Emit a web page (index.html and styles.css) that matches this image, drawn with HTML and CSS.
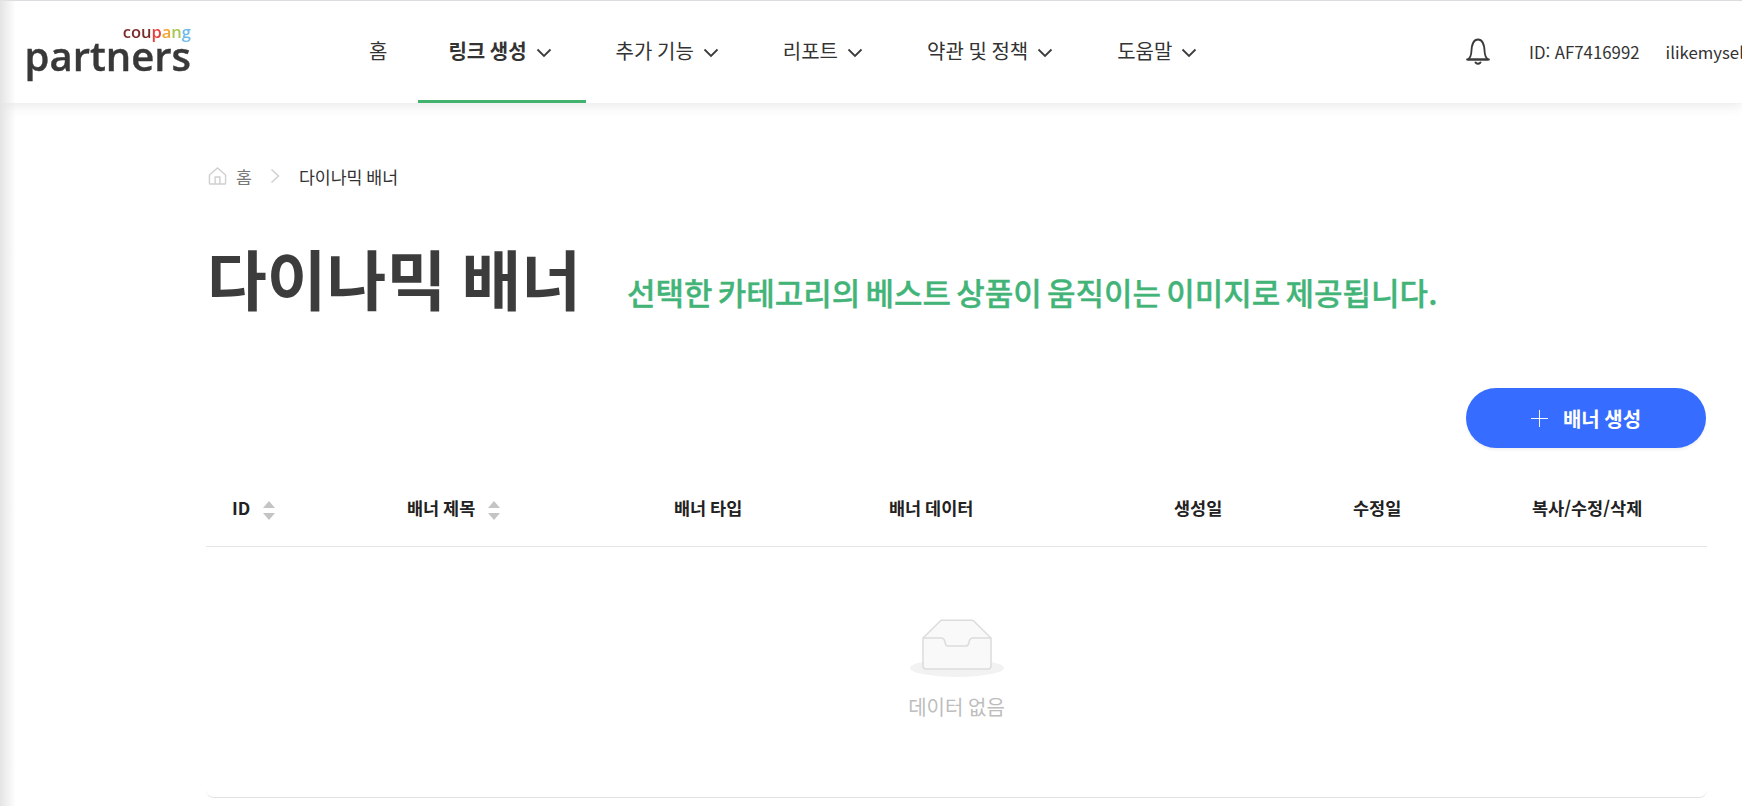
FILE: index.html
```html
<!DOCTYPE html>
<html lang="ko">
<head>
<meta charset="utf-8">
<title>다이나믹 배너</title>
<link rel="stylesheet" href="styles.css">
</head>
<body>
<header class="top">
  <a class="logo">
    <span class="logo-brand"><span class="c1">cou</span><span class="c2">p</span><span class="c3">a</span><span class="c4">n</span><span class="c5">g</span></span>
    <span class="logo-name">partners</span>
  </a>
  <nav class="nav">
    <a class="nav-item nav-home">홈</a>
    <a class="nav-item active">링크 생성<svg class="chev" viewBox="0 0 16 10"><path d="M1.500 1.500 8 8l6.500-6.500"/></svg></a>
    <a class="nav-item">추가 기능<svg class="chev" viewBox="0 0 16 10"><path d="M1.500 1.500 8 8l6.500-6.500"/></svg></a>
    <a class="nav-item">리포트<svg class="chev" viewBox="0 0 16 10"><path d="M1.500 1.500 8 8l6.500-6.500"/></svg></a>
    <a class="nav-item">약관 및 정책<svg class="chev" viewBox="0 0 16 10"><path d="M1.500 1.500 8 8l6.500-6.500"/></svg></a>
    <a class="nav-item">도움말<svg class="chev" viewBox="0 0 16 10"><path d="M1.500 1.500 8 8l6.500-6.500"/></svg></a>
  </nav>
  <div class="account">
    <svg class="bell" viewBox="0 0 24 28"><path d="M2 22.500c2.500-2 3.200-4 3.400-8C5.700 7 7 2.500 12 2.500s6.300 4.500 6.600 12c.2 4 .9 6 3.400 8Z"/><path d="M1 22.500h22M9.500 25.500c1.500 1.500 3.500 1.500 5 0"/></svg>
    <span class="acct-id">ID: AF7416992</span>
    <span class="acct-name">ilikemyself</span>
  </div>
</header>

<main class="page">
  <div class="crumbs">
    <svg class="home" viewBox="0 0 20 20"><path d="M1.500 9 10 1.500 18.500 9v8.500a1 1 0 0 1-1 1h-15a1 1 0 0 1-1-1Z"/><path d="M7.500 18.500V11h5v7.500"/></svg>
    <span class="crumb-home">홈</span>
    <svg class="crumb-sep" viewBox="0 0 10 16"><path d="M1.500 1.500 8.500 8l-7 6.500"/></svg>
    <span class="crumb-now">다이나믹 배너</span>
  </div>

  <div class="heading">
    <h1>다이나믹 배너</h1>
    <p>선택한 카테고리의 베스트 상품이 움직이는 이미지로 제공됩니다.</p>
  </div>

  <div class="actions">
    <button class="add"><svg class="plus" viewBox="0 0 18 18"><path d="M9 0v18M0 9h18"/></svg>배너 생성</button>
  </div>

  <section class="table">
    <div class="thead">
      <div class="th">ID<span class="sort"><i class="up"></i><i class="down"></i></span></div>
      <div class="th">배너 제목<span class="sort"><i class="up"></i><i class="down"></i></span></div>
      <div class="th">배너 타입</div>
      <div class="th">배너 데이터</div>
      <div class="th">생성일</div>
      <div class="th">수정일</div>
      <div class="th">복사/수정/삭제</div>
    </div>
    <div class="empty">
      <svg class="tray" viewBox="0 0 96 62">
        <ellipse class="tray-shadow" cx="48" cy="49" rx="47" ry="9"/>
        <path class="tray-body" d="M14 19 31 2.200c.6-.6 1.200-1 2-1h30c.8 0 1.400.4 2 1L82 19v28a3 3 0 0 1-3 3H17a3 3 0 0 1-3-3Z"/>
        <path class="tray-line" d="M14 19h18c2 0 3.200 1 3.700 3l.6 2.500c.4 1.600 1.400 2.500 3 2.500h17.400c1.600 0 2.600-.9 3-2.500l.6-2.500c.5-2 1.700-3 3.700-3h18"/>
      </svg>
      <span class="empty-text">데이터 없음</span>
    </div>
  </section>
</main>
</body>
</html>
```

FILE: styles.css
```css
* { box-sizing: border-box; }
html, body { height: 100%; }
body {
  margin: 0;
  background: #fff;
  color: #333;
  font-family: "Noto Sans CJK KR", "Noto Sans", sans-serif;
  overflow: hidden;
  position: relative;
}
body::before {
  content: "";
  position: absolute;
  left: 0; top: 0; bottom: 0;
  width: 16px;
  background: linear-gradient(to right, #e4e4e4, rgba(255,255,255,0));
  z-index: 3;
  pointer-events: none;
}
.top {
  display: flex;
  align-items: stretch;
  height: 103px;
  width: 1742px;
  border-top: 1px solid #dcdce0;
  background: #fff;
  box-shadow: 0 2px 12px rgba(0,0,0,.1);
  position: relative;
  z-index: 2;
}
.logo {
  flex: 0 0 auto;
  width: 165px;
  margin: 23px 0 0 26px;
  display: flex;
  flex-direction: column;
  align-items: flex-end;
  filter: blur(.4px);
}
.logo-brand {
  font: 600 16.500px/16px "Open Sans", sans-serif;
}
.c1 { color: #7b2d2d; }
.c2 { color: #e8413c; }
.c3 { color: #f3a733; }
.c4 { color: #a9c653; }
.c5 { color: #6fb8ea; }
.logo-name {
  font: 600 40px/31px "Open Sans", sans-serif;
  -webkit-text-stroke: .4px #383838;
  color: #383838;
}
.nav {
  flex: 0 0 1127px;
  display: flex;
  margin-left: 148px;
}
.nav-item {
  display: flex;
  align-items: center;
  height: 102px;
  padding: 0 34px 0 30px;
  font-size: 20px;
  word-spacing: -1px;
  color: #333;
  white-space: nowrap;
  border-bottom: 3px solid transparent;
}
.nav-home { padding-right: 31px; }
.nav-item.active {
  font-weight: 700;
  border-bottom-color: #41b36f;
}
.chev {
  width: 16px;
  height: 10px;
  margin: 4px 0 0 9px;
  fill: none;
  stroke: #3c3c3c;
  stroke-width: 1.800;
}
.account {
  flex: 0 0 auto;
  display: flex;
  align-items: center;
  height: 102px;
  font-size: 16.800px;
  color: #333;
  white-space: nowrap;
}
.bell {
  width: 24px;
  height: 28px;
  margin-bottom: 3px;
  fill: none;
  stroke: #3a3a3a;
  stroke-width: 1.800;
  stroke-linecap: round;
  stroke-linejoin: round;
}
.acct-id { margin-left: 39px; }
.acct-name { margin-left: 26px; }

.page {
  width: 1501px;
  margin-left: 206px;
}
.crumbs {
  display: flex;
  align-items: center;
  height: 32px;
  margin-top: 57px;
  padding-left: 2px;
  font-size: 17.300px;
  word-spacing: -1px;
}
.home {
  width: 19px;
  height: 20px;
  fill: none;
  stroke: #d0d0d0;
  stroke-width: 1.500;
}
.crumb-home { margin-left: 9px; color: #777; }
.crumb-sep {
  width: 10px;
  height: 16px;
  margin: 0 19px 0 18px;
  fill: none;
  stroke: #d0d0d0;
  stroke-width: 1.500;
}
.crumb-now { color: #333; }
.heading {
  display: flex;
  align-items: baseline;
  margin-top: 40px;
}
.heading h1 {
  margin: 0;
  padding-left: 1px;
  font-size: 65px;
  line-height: 90px;
  font-weight: 700;
  word-spacing: -3px;
  color: #3c3c3c;
}
.heading p {
  margin: 0 0 0 46px;
  font-size: 31px;
  font-weight: 500;
  -webkit-text-stroke: .35px #43b478;
  word-spacing: -3.500px;
  color: #43b478;
}
.actions {
  display: flex;
  justify-content: flex-end;
  margin: 66px 1px 0 0;
}
.add {
  display: flex;
  align-items: center;
  justify-content: center;
  width: 240px;
  height: 60px;
  border: 0;
  border-radius: 30px;
  background: #366cff;
  color: #fff;
  font: 700 20px "Noto Sans CJK KR", sans-serif;
  word-spacing: -1px;
  box-shadow: 0 2px 3px rgba(0,0,0,.06);
}
.plus {
  width: 17px;
  height: 17px;
  margin-right: 15px;
  fill: none;
  stroke: #fff;
  stroke-width: 1;
}
.table {
  border-bottom: 1px solid #e2e2e2;
  border-radius: 0 0 8px 8px;
  height: 350px;
}
.thead {
  display: grid;
  grid-template-columns: 175px 267px 215px 285px 179px 179px 1fr;
  align-items: center;
  height: 99px;
  padding: 21px 0 0 26px;
  border-bottom: 1px solid #e6e6e6;
}
.th {
  display: flex;
  align-items: center;
  font-size: 17.500px;
  font-weight: 700;
  word-spacing: -1px;
  color: #222;
  white-space: nowrap;
}
.sort {
  display: flex;
  flex-direction: column;
  gap: 5px;
  margin: 6px 0 0 13px;
}
.sort i {
  display: block;
  width: 0;
  height: 0;
  border-left: 6px solid transparent;
  border-right: 6px solid transparent;
}
.sort .up { border-bottom: 7px solid #c4c4c4; }
.sort .down { border-top: 7px solid #c4c4c4; }
.empty {
  display: flex;
  flex-direction: column;
  align-items: center;
  padding-top: 72px;
}
.tray { width: 96px; height: 62px; }
.tray-shadow { fill: #f2f2f2; }
.tray-body { fill: #f9f9f9; stroke: #dcdcdc; stroke-width: 1.500; }
.tray-line { fill: none; stroke: #dcdcdc; stroke-width: 1.500; }
.empty-text {
  margin-top: 11px;
  font-size: 20px;
  word-spacing: -1px;
  color: #bdbdbd;
}
```
